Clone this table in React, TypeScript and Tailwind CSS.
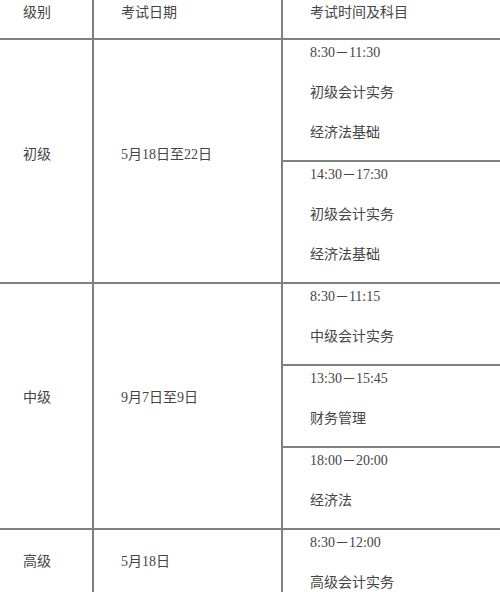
import React from "react";

const font = {
  fontFamily: '"Liberation Serif", "Noto Sans CJK SC", serif',
};

type Sub = string[];
type Section = { level: string; date: string; subs: Sub[]; pb: string };

const sections: Section[] = [
  {
    level: "初级",
    date: "5月18日至22日",
    subs: [
      ["8:30－11:30", "初级会计实务", "经济法基础"],
      ["14:30－17:30", "初级会计实务", "经济法基础"],
    ],
    pb: "pb-[12px]",
  },
  {
    level: "中级",
    date: "9月7日至9日",
    subs: [
      ["8:30－11:15", "中级会计实务"],
      ["13:30－15:45", "财务管理"],
      ["18:00－20:00", "经济法"],
    ],
    pb: "pb-[16px]",
  },
  {
    level: "高级",
    date: "5月18日",
    subs: [["8:30－12:00", "高级会计实务"]],
    pb: "pb-[16px]",
  },
];

export default function App() {
  return (
    <div
      className="w-[500px] h-[592px] overflow-hidden bg-white text-[14px] text-[#454545]"
      style={font}
    >
      {/* header */}
      <div className="flex h-[40px] border-b-2 border-[#808080]">
        <div className="w-[94px] shrink-0 border-r-2 border-[#808080] pl-[23px] leading-[26px]">
          级别
        </div>
        <div className="w-[189px] shrink-0 border-r-2 border-[#808080] pl-[27px] leading-[26px]">
          考试日期
        </div>
        <div className="flex-1 pl-[27px] leading-[26px]">考试时间及科目</div>
      </div>
      {sections.map((s, i) => (
        <div key={i} className="flex border-b-2 border-[#808080]">
          <div
            className={`w-[94px] shrink-0 border-r-2 border-[#808080] pl-[23px] flex items-center leading-[26px] ${s.pb}`}
          >
            {s.level}
          </div>
          <div
            className={`w-[189px] shrink-0 border-r-2 border-[#808080] pl-[27px] flex items-center leading-[26px] ${s.pb}`}
          >
            {s.date}
          </div>
          <div className="flex-1 flex flex-col">
            {s.subs.map((sub, j) => (
              <div
                key={j}
                className={`flex flex-col gap-[14px] pl-[27px] pb-[14px] leading-[26px] ${
                  j < s.subs.length - 1 ? "border-b-2 border-[#808080]" : ""
                }`}
              >
                {sub.map((line, k) => (
                  <div key={k} className="whitespace-nowrap">
                    {line}
                  </div>
                ))}
              </div>
            ))}
          </div>
        </div>
      ))}
    </div>
  );
}
